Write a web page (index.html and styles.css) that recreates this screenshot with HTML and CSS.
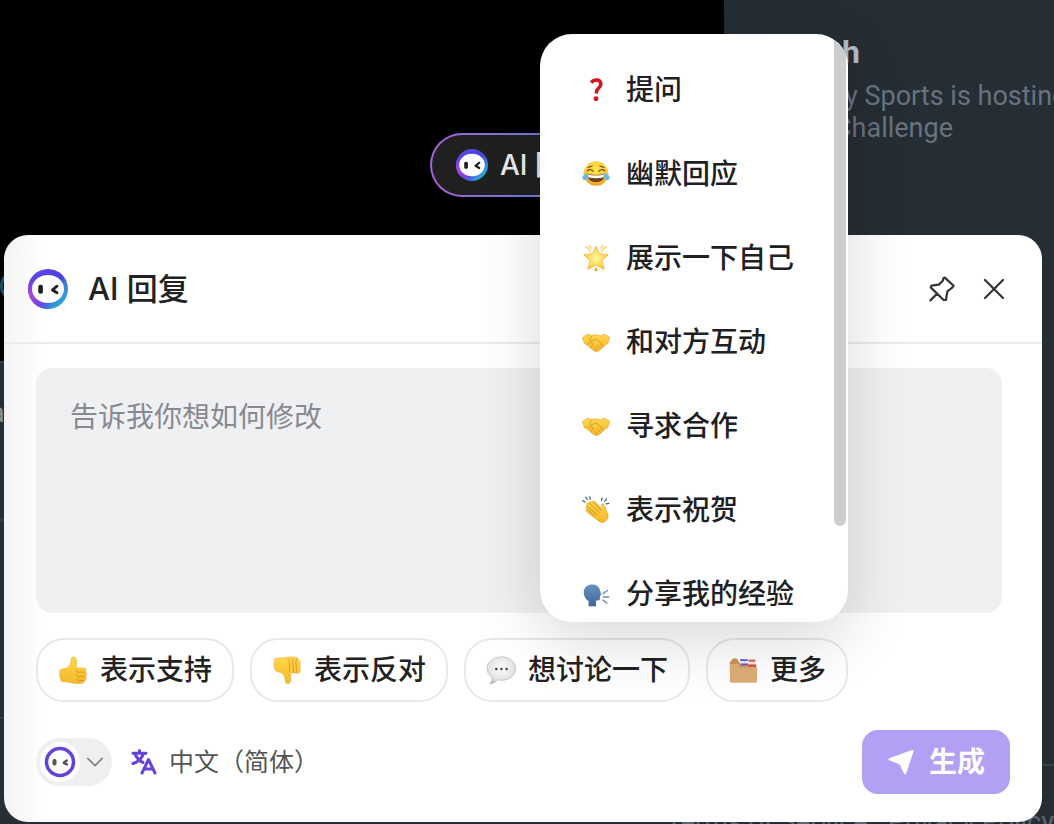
FILE: index.html
```html
<!DOCTYPE html>
<html lang="zh-CN">
<head>
<meta charset="utf-8">
<title>AI 回复</title>
<link rel="stylesheet" href="styles.css">
</head>
<body>
<svg class="defs" aria-hidden="true">
  <defs>
    <linearGradient id="ring" x1="0.1" y1="0.1" x2="0.9" y2="0.9">
      <stop offset="0" stop-color="#5a4be6"/><stop offset="0.5" stop-color="#4a3fe0"/><stop offset="0.72" stop-color="#3f7ddb"/><stop offset="1" stop-color="#22b4d6"/>
    </linearGradient>
    <radialGradient id="ringGlow" cx="0.05" cy="0.68" r="0.6">
      <stop offset="0" stop-color="#b048dc"/><stop offset="0.45" stop-color="#8a3fe0" stop-opacity="0.85"/><stop offset="1" stop-color="#4a35e8" stop-opacity="0"/>
    </radialGradient>
    <linearGradient id="skin" x1="0" y1="0" x2="0" y2="1">
      <stop offset="0" stop-color="#ffd84a"/><stop offset="1" stop-color="#f5b72b"/>
    </linearGradient>
    <radialGradient id="face" cx="0.5" cy="0.35" r="0.65">
      <stop offset="0" stop-color="#ffe84f"/><stop offset="0.7" stop-color="#fcc934"/><stop offset="1" stop-color="#e99a1e"/>
    </radialGradient>
    <radialGradient id="starFill" cx="0.5" cy="0.5" r="0.55">
      <stop offset="0" stop-color="#fff6a8"/><stop offset="0.6" stop-color="#ffdd55"/><stop offset="1" stop-color="#f4b73c"/>
    </radialGradient>
    <radialGradient id="bubble" cx="0.5" cy="0.4" r="0.6">
      <stop offset="0" stop-color="#fbfbfb"/><stop offset="0.75" stop-color="#e4e4e5"/><stop offset="1" stop-color="#bdbdbf"/>
    </radialGradient>
    <linearGradient id="head" x1="0" y1="0" x2="0" y2="1">
      <stop offset="0" stop-color="#6b92bd"/><stop offset="1" stop-color="#3f6596"/>
    </linearGradient>
    <symbol id="logo" viewBox="0 0 40 40">
      <circle cx="20" cy="20" r="20" fill="url(#ring)"/>
      <circle cx="20" cy="20" r="20" fill="url(#ringGlow)"/>
      <ellipse cx="20" cy="20" rx="16" ry="14" fill="#fff"/>
      <rect x="10.3" y="15.8" width="4.6" height="9" rx="2" fill="#1c1c1c"/>
      <path d="M29 17.2l-4.600 3.800 4.600 2.800" fill="none" stroke="#1c1c1c" stroke-width="2.800" stroke-linecap="round" stroke-linejoin="round"/>
    </symbol>
    <symbol id="handshake" viewBox="0 0 32 32">
      <path d="M0.5 11L6.5 7L11 8.500L16 7.700L21 9L25.500 7L31.500 10.500L29.500 17.500L26 20L20 25.500L16 27.200L11.500 24.500L6 19.500L3 18Z" fill="url(#skin)" stroke="#e8a426" stroke-width="0.8" stroke-linejoin="round"/>
      <path d="M11 9.500l-2.500 4.500c1.500 1.500 4 .7 5.500-1.200l2.800.2 8 6.500M21 19l3 2.600M17.500 20l3.500 3.300M14 21.500l3 3M6.500 18l4-2 2 2.500-2 3.500" fill="none" stroke="#d9932a" stroke-width="1" stroke-linecap="round" stroke-linejoin="round"/>
    </symbol>
  </defs>
</svg>

<div class="page">
  <div class="backdrop">
    <div class="feed">
      <div class="media"><span class="avatar"></span></div>
      <div class="post"><span class="post-text">a</span></div>
      <div class="post post-tall"></div>
      <div class="post post-rest"></div>
    </div>
    <aside class="sidebar">
      <h2 class="side-title">h</h2>
      <p class="side-text">y Sports is hosting</p>
      <p class="side-text side-text-end">Challenge</p>
      <div class="side-rule"></div>
      <p class="side-links"><span>Terms of Service</span><span>Privacy Policy</span></p>
    </aside>
  </div>

  <button class="ai-badge" type="button">
    <svg class="badge-logo"><use href="#logo"/></svg>AI 回复
  </button>

  <section class="dialog" aria-label="AI 回复">
    <header class="dialog-head">
      <svg class="head-logo"><use href="#logo"/></svg>
      <h1 class="dialog-title">AI 回复</h1>
      <button class="icon-btn" type="button" aria-label="Pin">
        <svg viewBox="0 0 28 28"><path d="M16.8 2.600L25.600 10.800L23.800 13L19.600 16.200Q18.400 20 18 25H15.600L2.700 12.400L3.500 10.600L10.800 9.600L14.800 5.800L15.400 3.200ZM9 18.800L2.400 25.400"/></svg>
      </button>
      <button class="icon-btn" type="button" aria-label="Close">
        <svg viewBox="0 0 28 28"><path d="M5 5l18 18M23 5l-18 18"/></svg>
      </button>
    </header>
    <div class="dialog-body">
      <textarea class="prompt" aria-label="修改说明" placeholder="告诉我你想如何修改"></textarea>
      <div class="chips">
        <button class="chip" type="button">
          <svg viewBox="0 0 32 32"><path d="M2 17Q2 15 4.500 15L9.500 13.800Q14 10.500 14 5.500Q14 1.800 16.800 2Q19.800 2.300 19.800 7.500Q19.800 11 19.200 13.800H27.500Q30.300 14 30 16.500Q29.800 18 28.800 18.300Q31 19 30.500 21Q30.200 22.700 29 23Q30.500 24 29.800 25.800Q29.300 27 28 27.200Q28.500 30 25.500 30.200Q18 31 12.500 29.300L3.500 28Q1 23 2 17Z" fill="url(#skin)" stroke="#e8ab36" stroke-width="0.6"/><path d="M28.800 18.300h-7.500q-2.200-.4-1.800-2.600M29 23h-7.200q-2-.6-1.600-3M28 27.200h-6q-2-.7-1.600-3" fill="none" stroke="#d9952a" stroke-width="1"/></svg>
          表示支持
        </button>
        <button class="chip" type="button">
          <svg viewBox="0 0 32 32"><path d="M2.500 5Q2.300 3 5 3.500L12.500 3Q19 1.500 25.500 2.400Q28.500 2.600 28.200 5.200Q30.200 5.400 30 7.500V17Q29.800 19.600 27.500 19.400L19.800 19Q20.200 23 20 27Q19.600 30.600 17 30.600Q14 30.500 14 26Q13.800 21.500 10.400 19.200L5 17.500Q3 17 2.600 14Q1.800 9 2.500 5Z" fill="url(#skin)" stroke="#e8ab36" stroke-width="0.6"/><path d="M22.500 3.500Q21 8 22.500 12.500T22 19M26 4.500Q24.800 9 26 13T25.500 19M18.500 4Q17.500 8 18.800 12L18.500 18" fill="none" stroke="#d9952a" stroke-width="1"/></svg>
          表示反对
        </button>
        <button class="chip" type="button">
          <svg viewBox="0 0 32 32"><path d="M16.500 2C25 2 31.500 7.500 31.500 14.500S25 27 16.500 27Q14.500 27 12.500 26.500Q9 30.500 4 31Q6.800 28 6.500 24.300Q1 20 1 14.500C1 7.500 8 2 16.500 2Z" fill="url(#bubble)" stroke="#b2b2b4" stroke-width="0.7"/><g fill="#3c3c3e"><circle cx="11" cy="15" r="1.300"/><circle cx="16.500" cy="15" r="1.300"/><circle cx="22" cy="15" r="1.300"/></g></svg>
          想讨论一下
        </button>
        <button class="chip" type="button">
          <svg viewBox="0 0 32 32"><path d="M2 8L5 4Q8 2.500 10.500 5L12 8L30 11V17H2Z" fill="#c99659"/><path d="M13 4.500h8v6h-8z" fill="#e8e9f5"/><path d="M13 4.500h8v1.800h-8zM13.500 9h8v2h-8z" fill="#5b58cf"/><path d="M22 5h7v6h-7z" fill="#f5dfda"/><path d="M22 5h7v1.800h-7zM22 10h8v2.500h-8z" fill="#d8493c"/><path d="M2 9.500H11L13 13H31V28Q31 29.500 29.500 29.500H3.500Q2 29.500 2 28Z" fill="#dcae76"/></svg>
          更多
        </button>
      </div>
      <footer class="dialog-foot">
        <button class="persona" type="button" aria-label="Persona">
          <span class="persona-face">
            <svg viewBox="0 0 32 32"><circle cx="16" cy="16" r="13.500" fill="#fff" stroke="#6543d6" stroke-width="3.500"/><rect x="8.500" y="13" width="4" height="6.500" rx="1.800" fill="#555"/><path d="M22.800 14.500l-3 2.300 3 1.600" fill="none" stroke="#555" stroke-width="2.500" stroke-linecap="round" stroke-linejoin="round"/></svg>
          </span>
          <svg class="chevron" viewBox="0 0 20 20"><path d="M2 6l8 8 8-8"/></svg>
        </button>
        <button class="language" type="button">
          <svg viewBox="0 0 28 28"><path d="M3 5.200H16M9.500 2.500V5M5 6Q8 12.500 13 14.500M13.500 5.500Q11 13 3 15.500M12 25L18.500 11.500L25 25M14.500 21H22.500"/></svg>
          中文（简体）
        </button>
        <button class="generate" type="button">
          <svg viewBox="0 0 28 28"><path d="M25 2Q27 1.500 26.500 3.500L19.200 25.500Q18.200 27.500 17 25.500L13 17.300Q12 16 10.500 15.500L2 12.200Q.6 11.200 2.200 10.300Z" fill="#fff"/></svg>
          生成
        </button>
      </footer>
    </div>
  </section>

  <div class="menu" role="menu">
    <button class="menu-item" type="button" role="menuitem">
      <svg viewBox="0 0 32 32"><path d="M10.500 7.500Q13 4.500 16.500 4.500Q21.500 4.500 21.500 9Q21.500 11.800 18.800 14Q16.500 16 16.200 20" fill="none" stroke="#d3141e" stroke-width="4"/><circle cx="16" cy="26" r="2.800" fill="#d3141e"/></svg>
      提问
    </button>
    <button class="menu-item" type="button" role="menuitem">
      <svg viewBox="0 0 32 32"><circle cx="16" cy="15.500" r="14" fill="url(#face)"/><path d="M5.500 15.500Q16 18.500 26.500 15.500Q26 25.500 16 25.500T5.500 15.500Z" fill="#76421e"/><path d="M6.500 16.300Q16 19 25.500 16.300Q25.300 19.300 24.300 20Q16 21.500 7.700 20Q6.700 19 6.500 16.300Z" fill="#fff"/><path d="M6 12.500Q9 9.500 13 12.800M19 12.800Q23 9.500 26 12.500M7 8.500L11.500 6.800M25 8.500L20.500 6.800" fill="none" stroke="#764014" stroke-width="1.300" stroke-linecap="round"/><path d="M7 15.500Q.5 16.500 .5 20Q.5 23.300 4 23Q7 22.500 7 15.500ZM25 15.500Q31.500 16.500 31.500 20Q31.500 23.300 28 23Q25 22.500 25 15.500Z" fill="#5dbcec"/></svg>
      幽默回应
    </button>
    <button class="menu-item" type="button" role="menuitem">
      <svg viewBox="0 0 32 32"><path d="M16 2.500L19.800 11L30 12.300L22.700 19L25.500 29L16 24L6.500 29L9.300 19L2 12.300L12.200 11Z" fill="url(#starFill)" stroke="#efb847" stroke-width="1" stroke-linejoin="round"/><path d="M4.500 3L10 8.500M27.500 3L22 8.500M8 2L10.500 5M24 2L21.500 5" stroke="#f6d878" stroke-width="1.800" stroke-linecap="round"/><path d="M16 26L18 30Q16 32 14 30Z" fill="#eba62d"/></svg>
      展示一下自己
    </button>
    <button class="menu-item" type="button" role="menuitem">
      <svg><use href="#handshake"/></svg>
      和对方互动
    </button>
    <button class="menu-item" type="button" role="menuitem">
      <svg><use href="#handshake"/></svg>
      寻求合作
    </button>
    <button class="menu-item" type="button" role="menuitem">
      <svg viewBox="0 0 32 32"><path d="M4.500 14.500Q3.800 12 6 11.800L5.500 9Q6 7 8 7.800Q9 5.500 11 7L12.500 6Q14.500 5.500 16 7.500L21.500 14Q22.500 12.500 22.300 10.500Q22.500 8.300 24 9Q26 10 26.800 14L29.500 21.500Q30.500 24 29 26L26 29.500Q23 31.500 19 28.500L6 18.500Q4 16.500 5.500 15.500Z" fill="url(#skin)" stroke="#e3a02a" stroke-width="0.800"/><path d="M5.500 15L15 23M6 11.800L17.500 21.500M8 7.800L20 19M12.500 6.500L22 16.500" fill="none" stroke="#d18c22" stroke-width="1.100"/><path d="M.8 5.500l2.700 1.300M4.500 1.500l1.500 2.500M9 1l.3 2.500M23 2.500l-.7 2.500M28 3.500l-2 2.300M30.500 8.500l-2.800.5" stroke="#47637a" stroke-width="1.500" stroke-linecap="round"/></svg>
      表示祝贺
    </button>
    <button class="menu-item" type="button" role="menuitem">
      <svg viewBox="0 0 32 32"><path d="M2 14C2 8 6.500 5 12 5Q19 5 20.500 11.500L22 16.500L20.500 18V21Q20.500 23.500 16 23.500V30H7.500V24C4 22 2 18.500 2 14Z" fill="url(#head)"/><path d="M24 15.500L29 12M24.500 19.500H30.500M24 23L28.500 26.500" fill="none" stroke="#6d8fb5" stroke-width="1.600" stroke-linecap="round"/></svg>
      分享我的经验
    </button>
    <span class="scroll-thumb"></span>
  </div>
</div>
</body>
</html>
```

FILE: styles.css
```css
* { box-sizing: border-box; }

body {
  margin: 0;
  background: #252d35;
  font-family: Inter, "Noto Sans CJK SC", sans-serif;
}

h1, h2, p { margin: 0; }

button {
  margin: 0;
  padding: 0;
  border: 0;
  background: none;
  color: inherit;
  font: inherit;
  white-space: nowrap;
  cursor: pointer;
}

.defs {
  position: absolute;
  width: 0;
  height: 0;
}

.page {
  position: relative;
  height: 100vh;
  overflow: hidden;
}

/* Page behind the dialog */

.backdrop {
  display: grid;
  grid-template-columns: 1fr 330px;
  height: 100%;
}

.feed {
  display: flex;
  flex-direction: column;
}

.media {
  height: 361px;
  padding-top: 270px;
  background: #000;
}

.avatar {
  display: block;
  width: 32px;
  height: 32px;
  border: 3px solid #14506e;
  border-radius: 50%;
}

.post {
  height: 158px;
  padding-top: 34px;
  border-top: 2px solid #343c44;
}

.post-text {
  display: block;
  margin-left: -10px;
  color: #8c969f;
  font-size: 26px;
  line-height: 32px;
}

.post-tall { height: 198px; }

.post-rest { flex: 1; }

.sidebar {
  display: flex;
  flex-direction: column;
  padding-top: 32px;
  font-family: Roboto, sans-serif;
}

.side-title {
  padding-left: 118px;
  color: #b0bcc8;
  font-size: 32px;
  line-height: 40px;
}

.side-text {
  padding-left: 121px;
  margin-top: 8px;
  color: #68737f;
  font-size: 27px;
  line-height: 32px;
  white-space: nowrap;
}

.side-text-end {
  margin-top: 0;
  padding-left: 110px;
}

.side-rule {
  margin-top: 620px;
  border-top: 2px solid #38414a;
}

.side-links {
  display: flex;
  justify-content: flex-end;
  gap: 20px;
  margin-top: 40px;
  color: #5c6670;
  font-size: 27px;
  line-height: 32px;
  white-space: nowrap;
}

.ai-badge {
  position: absolute;
  top: 133px;
  left: 430px;
  display: flex;
  align-items: center;
  gap: 12px;
  height: 64px;
  padding: 0 24px;
  border: 2px solid transparent;
  border-radius: 32px;
  background:
    linear-gradient(#202020, #202020) padding-box,
    linear-gradient(90deg, #a75fd8, #6b7fd0 60%, #4fa0d0) border-box;
  color: #ececec;
  font-size: 28px;
  font-weight: 500;
  line-height: 40px;
}

.badge-logo {
  width: 32px;
  height: 32px;
}

/* Dialog */

.dialog {
  position: absolute;
  top: 235px;
  right: 12px;
  bottom: 2px;
  left: 4px;
  display: flex;
  flex-direction: column;
  border-radius: 24px;
  background: linear-gradient(90deg, #f4f4f4, #fff 40px);
  color: #222;
}

.dialog-head {
  display: flex;
  align-items: center;
  gap: 24px;
  height: 109px;
  padding: 0 34px 0 24px;
  border-bottom: 2px solid #ebebec;
}

.head-logo {
  width: 40px;
  height: 40px;
}

.dialog-title {
  flex: 1;
  margin-left: -4px;
  font-size: 31px;
  font-weight: 500;
  line-height: 42px;
}

.icon-btn {
  width: 28px;
  height: 28px;
}

.icon-btn svg {
  display: block;
  fill: none;
  stroke: #333;
  stroke-width: 2.2;
  stroke-linecap: round;
  stroke-linejoin: round;
}

.dialog-body {
  flex: 1;
  display: flex;
  flex-direction: column;
  padding: 24px 32px 28px;
}

.prompt {
  flex: 1;
  margin-right: 8px;
  padding: 28px 34px;
  border: 0;
  border-radius: 16px;
  background: #eff0f2;
  color: #222;
  font: inherit;
  font-size: 28px;
  line-height: 42px;
  resize: none;
}

.prompt::placeholder { color: #888991; }

.chips {
  display: flex;
  gap: 16px;
  margin-top: 25px;
}

.chip {
  display: flex;
  align-items: center;
  gap: 12px;
  height: 64px;
  padding: 0 20px;
  border: 2px solid #e8e8e9;
  border-radius: 28px;
  background: #fff;
  font-size: 28px;
  font-weight: 500;
  line-height: 38px;
}

.chip svg {
  width: 30px;
  height: 30px;
}

.dialog-foot {
  display: flex;
  align-items: center;
  margin-top: 28px;
}

.persona {
  display: flex;
  align-items: center;
  gap: 6px;
  width: 76px;
  height: 48px;
  padding: 4px;
  border-radius: 24px;
  background: #eeeff1;
}

.persona-face {
  display: grid;
  place-items: center;
  width: 40px;
  height: 40px;
  border-radius: 50%;
  background: #fff;
}

.persona-face svg {
  width: 32px;
  height: 32px;
}

.chevron {
  width: 18px;
  height: 18px;
  fill: none;
  stroke: #858585;
  stroke-width: 2;
  stroke-linecap: round;
  stroke-linejoin: round;
}

.language {
  display: flex;
  align-items: center;
  gap: 11px;
  margin-left: 18px;
  color: #555;
  font-size: 25px;
  line-height: 36px;
}

.language svg {
  width: 28px;
  height: 28px;
  fill: none;
  stroke: #6543d6;
  stroke-width: 3;
  stroke-linecap: round;
  stroke-linejoin: round;
}

.generate {
  display: flex;
  align-items: center;
  justify-content: center;
  gap: 14px;
  width: 148px;
  height: 64px;
  margin-left: auto;
  border-radius: 16px;
  background: #b3a0f4;
  color: #fff;
  font-size: 28px;
  font-weight: 700;
  line-height: 38px;
}

.generate svg {
  width: 28px;
  height: 28px;
}

/* Menu over the dialog */

.menu {
  position: absolute;
  top: 34px;
  left: 540px;
  width: 308px;
  height: 588px;
  padding: 14px 0;
  overflow: hidden;
  border-radius: 32px;
  background: #fff;
  box-shadow: 0 16px 64px rgba(0, 0, 0, 0.16);
  color: #202023;
}

.menu-item {
  display: flex;
  align-items: center;
  gap: 16px;
  width: 100%;
  height: 84px;
  padding: 0 42px;
  font-size: 28px;
  font-weight: 500;
  line-height: 38px;
}

.menu-item svg {
  flex: none;
  width: 28px;
  height: 28px;
}

.scroll-thumb {
  position: absolute;
  top: 0;
  right: 2px;
  width: 12px;
  height: 492px;
  border-radius: 0 0 6px 6px;
  background: #cdcdcd;
}
```
